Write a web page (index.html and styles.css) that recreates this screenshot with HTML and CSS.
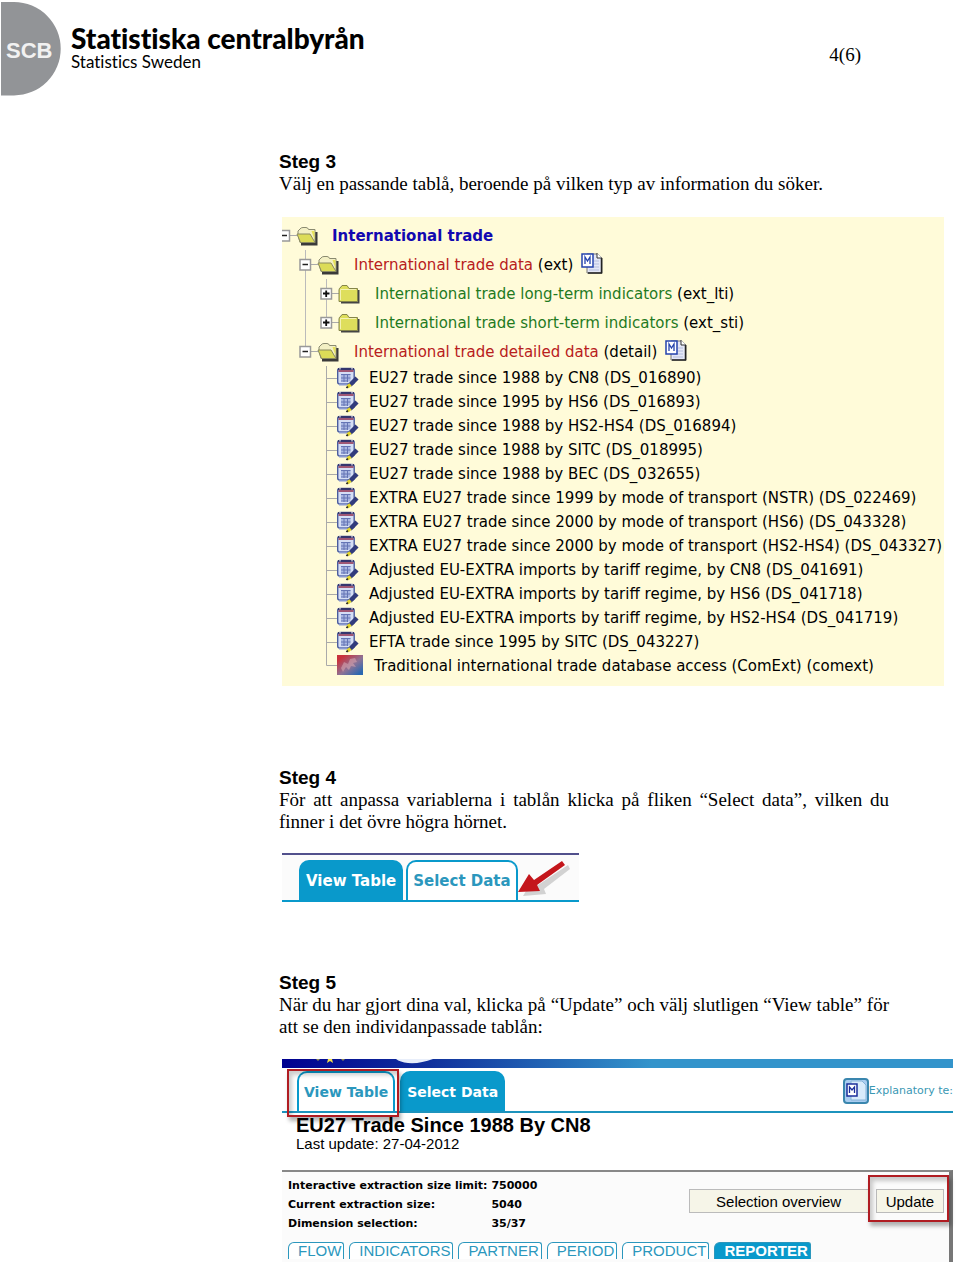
FILE: index.html
```html
<!DOCTYPE html>
<html lang="sv">
<head>
    <meta charset="UTF-8">
    <meta name="viewport" content="width=device-width, initial-scale=1.0">
    <title>Statistiska centralbyrån</title>
    <link rel="stylesheet" href="styles.css">
</head>
<body>
    <!-- Shared icons -->
    <svg class="sprite" aria-hidden="true">
        <symbol id="folder-open" viewBox="0 0 22 20">
            <path d="M5 18H20V6" fill="none" stroke="#3a3a3a" stroke-width="3"/>
            <path d="M2 9V5Q3 4 4 3Q5 1.500 7 1.500H10Q12 1.500 12.500 3.500H19V16.500H4Z" fill="#f3f0c4" stroke="#8a8a70"/>
            <path d="M1 8H14L19 16.500H4.500Z" fill="#dcdc58" stroke="#8a8a60"/>
            <path d="M15.500 5H18.500V13.500Z" fill="#e6e25a"/>
        </symbol>
        <symbol id="folder" viewBox="0 0 22 20">
            <path d="M3 18.500H20.500V6" fill="none" stroke="#444" stroke-width="2"/>
            <path d="M1 6Q1 4 3 3L4 1.500H9L11 4.500H19.500V17.500H1Z" fill="#dede5c" stroke="#85854a"/>
            <path d="M2.500 16V5.500H18" fill="none" stroke="#f4f2b4"/>
        </symbol>
        <symbol id="node-open" viewBox="0 0 40 30">
            <path d="M12 14.500H19" stroke="#aaa"/>
            <rect x="1" y="9.500" width="10.500" height="10.500" fill="#fff" stroke="#999" stroke-width="1.500"/>
            <path d="M3.500 14.500H9" stroke="#222" stroke-width="1.500"/>
            <use href="#folder-open" x="18" y="5" width="22" height="20"/>
        </symbol>
        <symbol id="node-closed" viewBox="0 0 40 30">
            <path d="M12 14.500H19" stroke="#aaa"/>
            <rect x="1" y="9.500" width="10.500" height="10.500" fill="#fff" stroke="#999" stroke-width="1.500"/>
            <path d="M3 14.500H9.500M6.200 11.500V18" stroke="#111" stroke-width="1.800"/>
            <use href="#folder" x="18" y="5" width="22" height="20"/>
        </symbol>
        <symbol id="dataset" viewBox="0 0 33 24">
            <path d="M0.500 0V24M0 12.500H11" stroke="#aaa"/>
            <rect x="11.700" y="2.500" width="16.500" height="15.500" rx="2" fill="#d5def5" stroke="#4a5c9e" stroke-width="1.400"/>
            <path d="M12 3H28" stroke="#34366e" stroke-width="2"/>
            <path d="M12.500 5H27.500" stroke="#8d2a48" stroke-width="1.500"/>
            <path d="M14 1.500V3.500M26 1.500V3.500" stroke="#fff"/>
            <rect x="15" y="8" width="9.500" height="7.500" fill="#a9b7e2"/>
            <path d="M15 8.500H24.500M15 12H24.500M15 15H22" stroke="#6475b5"/>
            <path d="M18 8V16M21.500 8V16" stroke="#6475b5"/>
            <path d="M13 18.500H21" stroke="#8a9ad0" stroke-width="2"/>
            <path d="M31 12L24 19" stroke="#313b7c" stroke-width="4.500"/>
            <path d="M24.500 18.500L21.500 21" stroke="#e3d72c" stroke-width="3.500"/>
            <path d="M21.800 20.500L20.500 22" stroke="#222" stroke-width="1.800"/>
        </symbol>
        <symbol id="metadata" viewBox="0 0 22 22">
            <path d="M6 2H17L21 6V21H6Z" fill="#e4e7f6" stroke="#777"/>
            <path d="M7 21H20.500V6" fill="none" stroke="#222" stroke-width="1.500"/>
            <path d="M16 1V6H21" fill="#fff" stroke="#333"/>
            <path d="M13 9H18M13 12H18M8 15H18M8 18H18" stroke="#b4bddd"/>
            <rect x="1" y="2" width="11" height="13" fill="#fff" stroke="#2443ad" stroke-width="1.500"/>
            <path d="M4 12V5L6.500 9L9 5V12" fill="none" stroke="#2443ad" stroke-width="1.300"/>
        </symbol>
    </svg>

    <header class="page-header">
        <svg class="logo" viewBox="0 0 61 96" role="img" aria-label="SCB">
            <path d="M1 2H14A46.700 46.700 0 0 1 14 95.400H1Z" fill="#929497"/>
            <text x="6" y="58" class="logo-letters">SCB</text>
        </svg>
        <div class="brand">
            <div class="brand-name">Statistiska centralbyrån</div>
            <div class="brand-sub">Statistics Sweden</div>
        </div>
        <div class="page-number">4(6)</div>
    </header>

    <main>
        <section class="step">
            <h2>Steg 3</h2>
            <p>Välj en passande tablå, beroende på vilken typ av information du söker.</p>

            <div class="tree">
                <div class="row root">
                    <svg class="node-root" viewBox="4 0 36 30"><use href="#node-open" width="40" height="30"/></svg>
                    <a href="#">International trade</a>
                </div>
                <ul class="level-1">
                    <li>
                        <div class="row theme">
                            <svg class="node" viewBox="0 0 40 30"><path d="M6.500 0V30" stroke="#bbb"/><use href="#node-open" width="40" height="30"/></svg>
                            <span><a href="#">International trade data</a> (ext)</span>
                            <svg class="meta"><use href="#metadata"/></svg>
                        </div>
                        <ul class="level-2">
                            <li class="row group">
                                <svg class="node" viewBox="0 0 40 30"><path d="M6.500 0V30" stroke="#bbb"/><use href="#node-closed" width="40" height="30"/></svg>
                                <span><a href="#">International trade long-term indicators</a> (ext_lti)</span>
                            </li>
                            <li class="row group">
                                <svg class="node" viewBox="0 0 40 30"><path d="M6.500 0V15" stroke="#bbb"/><use href="#node-closed" width="40" height="30"/></svg>
                                <span><a href="#">International trade short-term indicators</a> (ext_sti)</span>
                            </li>
                        </ul>
                    </li>
                    <li>
                        <div class="row theme">
                            <svg class="node" viewBox="0 0 40 30"><path d="M6.500 0V15" stroke="#bbb"/><use href="#node-open" width="40" height="30"/></svg>
                            <span><a href="#">International trade detailed data</a> (detail)</span>
                            <svg class="meta"><use href="#metadata"/></svg>
                        </div>
                        <ul class="datasets">
                            <li><svg><use href="#dataset"/></svg><a href="#">EU27 trade since 1988 by CN8 (DS_016890)</a></li>
                            <li><svg><use href="#dataset"/></svg><a href="#">EU27 trade since 1995 by HS6 (DS_016893)</a></li>
                            <li><svg><use href="#dataset"/></svg><a href="#">EU27 trade since 1988 by HS2-HS4 (DS_016894)</a></li>
                            <li><svg><use href="#dataset"/></svg><a href="#">EU27 trade since 1988 by SITC (DS_018995)</a></li>
                            <li><svg><use href="#dataset"/></svg><a href="#">EU27 trade since 1988 by BEC (DS_032655)</a></li>
                            <li><svg><use href="#dataset"/></svg><a href="#">EXTRA EU27 trade since 1999 by mode of transport (NSTR) (DS_022469)</a></li>
                            <li><svg><use href="#dataset"/></svg><a href="#">EXTRA EU27 trade since 2000 by mode of transport (HS6) (DS_043328)</a></li>
                            <li><svg><use href="#dataset"/></svg><a href="#">EXTRA EU27 trade since 2000 by mode of transport (HS2-HS4) (DS_043327)</a></li>
                            <li><svg><use href="#dataset"/></svg><a href="#">Adjusted EU-EXTRA imports by tariff regime, by CN8 (DS_041691)</a></li>
                            <li><svg><use href="#dataset"/></svg><a href="#">Adjusted EU-EXTRA imports by tariff regime, by HS6 (DS_041718)</a></li>
                            <li><svg><use href="#dataset"/></svg><a href="#">Adjusted EU-EXTRA imports by tariff regime, by HS2-HS4 (DS_041719)</a></li>
                            <li><svg><use href="#dataset"/></svg><a href="#">EFTA trade since 1995 by SITC (DS_043227)</a></li>
                            <li>
                                <svg class="comext" viewBox="0 0 38 24">
                                    <defs>
                                        <linearGradient id="comext-bg" x1="0" y1="0" x2="1" y2="1">
                                            <stop offset="0.150" stop-color="#c8323c"/>
                                            <stop offset="0.550" stop-color="#8d7396"/>
                                            <stop offset="0.900" stop-color="#2a68b0"/>
                                        </linearGradient>
                                    </defs>
                                    <path d="M0.500 0V11.500H11" fill="none" stroke="#aaa"/>
                                    <rect x="11" y="1" width="26" height="20" fill="url(#comext-bg)"/>
                                    <path d="M15 14L18 8L22 10L24 5L29 4L31 8L27 9L30 13L25 12L23 16L20 13L17 18Z" fill="#d3a5b0" opacity="0.600"/>
                                </svg>
                                <a href="#">Traditional international trade database access (ComExt) (comext)</a>
                            </li>
                        </ul>
                    </li>
                </ul>
            </div>
        </section>

        <section class="step step-4">
            <h2>Steg 4</h2>
            <p>För att anpassa variablerna i tablån klicka på fliken “Select data”, vilken du finner i det övre högra hörnet.</p>

            <div class="tabs-figure">
                <nav class="tabs">
                    <a href="#" class="tab filled">View Table</a>
                    <a href="#" class="tab outlined">Select Data</a>
                </nav>
                <svg class="arrow" viewBox="0 0 60 46">
                    <path d="M6 36L15 21L21 25L51 5L53 9L27 29L29 34Z" fill="#888" opacity="0.350"/>
                    <path d="M1 32L12 14L17 20L45 1L48 5L20 25L23 31Z" fill="#c4161c"/>
                </svg>
            </div>
        </section>

        <section class="step step-5">
            <h2>Steg 5</h2>
            <p>När du har gjort dina val, klicka på “Update” och välj slutligen “View table” för att se den individanpassade tablån:</p>

            <div class="extraction">
                <svg class="banner" viewBox="0 0 671 9" preserveAspectRatio="none">
                    <defs>
                        <linearGradient id="banner-bg">
                            <stop offset="0" stop-color="#000090"/>
                            <stop offset="0.220" stop-color="#10309c"/>
                            <stop offset="0.550" stop-color="#3394cb"/>
                        </linearGradient>
                    </defs>
                    <rect width="671" height="9" fill="url(#banner-bg)"/>
                    <path d="M46 0H50L51 4L48 2L45 4Z" fill="#f5df4c"/>
                    <path d="M34 0H38L36 2ZM59 0H63L61 2Z" fill="#8f8a5a"/>
                    <path d="M114 0H151Q138 5 126 4Q118 3 114 0Z" fill="#e8eefa"/>
                </svg>
                <div class="tab-bar">
                    <nav class="tabs">
                        <a href="#" class="tab outlined marked">View Table</a>
                        <a href="#" class="tab filled">Select Data</a>
                    </nav>
                    <a href="#" class="explanatory">
                        <svg viewBox="0 0 26 26">
                            <rect x="1" y="1" width="24" height="24" rx="3" fill="#a9cdf0" stroke="#3a86ae" stroke-width="2"/>
                            <path d="M8 3H19L23 7V22H8Z" fill="#d8ebfb" stroke="#86b4d8"/>
                            <rect x="4" y="6" width="10" height="12" fill="#fff" stroke="#1b2f9c" stroke-width="1.500"/>
                            <path d="M6.500 15V9L9 12L11.500 9V15" fill="none" stroke="#1b2f9c" stroke-width="1.300"/>
                        </svg>
                        <span>Explanatory te:</span>
                    </a>
                </div>
                <h3>EU27 Trade Since 1988 By CN8</h3>
                <div class="updated">Last update: 27-04-2012</div>

                <div class="panel">
                    <div class="panel-top">
                        <table>
                            <tr><th scope="row">Interactive extraction size limit:</th><td>750000</td></tr>
                            <tr><th scope="row">Current extraction size:</th><td>5040</td></tr>
                            <tr><th scope="row">Dimension selection:</th><td>35/37</td></tr>
                        </table>
                        <div class="actions">
                            <button type="button" class="overview">Selection overview</button>
                            <span class="marked"><button type="button">Update</button></span>
                        </div>
                    </div>
                    <nav class="dimensions">
                        <a href="#">FLOW</a>
                        <a href="#">INDICATORS</a>
                        <a href="#">PARTNER</a>
                        <a href="#">PERIOD</a>
                        <a href="#">PRODUCT</a>
                        <a href="#" class="active">REPORTER</a>
                    </nav>
                </div>
            </div>
        </section>
    </main>
</body>
</html>
```
FILE: styles.css
```css
* {
    box-sizing: border-box;
}
body {
    margin: 0;
    background-color: #fff;
    color: #000;
    font-family: "Liberation Serif", "Times New Roman", serif;
    font-size: 19px;
    line-height: 22px;
}
a {
    color: inherit;
    text-decoration: none;
}
ul {
    list-style: none;
    margin: 0;
    padding: 0;
}
svg {
    flex: none;
}
.sprite {
    display: none;
}

/* Header */
.page-header {
    display: flex;
    align-items: flex-start;
    padding-right: 99px;
}
.logo {
    width: 61px;
    height: 96px;
}
.logo-letters {
    font-family: "Liberation Sans", Arial, sans-serif;
    font-size: 22px;
    font-weight: bold;
    fill: #f1f1f1;
}
.brand {
    flex: 1;
    padding: 24px 0 0 10px;
    font-family: Lato, sans-serif;
    font-variant-ligatures: none;
}
.brand-name {
    font-size: 28px;
    font-weight: 900;
    line-height: 29px;
}
.brand-sub {
    font-size: 17px;
    line-height: 18px;
}
.page-number {
    padding-top: 44px;
}

/* Steps */
main {
    padding: 55px 7px 0 279px;
}
h2 {
    margin: 0;
    font-family: "Liberation Sans", Arial, sans-serif;
    font-size: 19px;
    line-height: 22px;
}
p {
    max-width: 610px;
    margin: 0;
    text-align: justify;
}
.step-4 {
    padding-top: 81px;
}
.step-5 {
    padding-top: 70px;
}

/* Navigation tree */
.tree {
    max-width: 662px;
    margin: 22px 0 0 3px;
    padding: 4px 0 8px;
    background-color: #fffbd9;
    font-family: "DejaVu Sans", Verdana, sans-serif;
    font-size: 15px;
    white-space: nowrap;
}
.row {
    display: flex;
    align-items: center;
    height: 29px;
}
.node {
    width: 40px;
    height: 30px;
    margin-right: 15px;
}
.node-root {
    width: 36px;
    height: 30px;
    margin-right: 14px;
}
.meta {
    width: 22px;
    height: 22px;
    margin: 0 0 4px 8px;
}
.root {
    color: #1208b0;
    font-weight: bold;
}
.theme a {
    color: #b8201c;
}
.group a {
    color: #1f7a1f;
}
.level-1 .theme {
    padding-left: 17px;
}
.level-2 {
    margin-left: 23px;
    padding-left: 14px;
    border-left: 1px solid #bbb;
}
.datasets {
    margin-left: 44px;
}
.datasets li {
    display: flex;
    align-items: center;
    height: 24px;
}
.datasets svg {
    width: 33px;
    height: 24px;
    margin-right: 10px;
}
.datasets .comext {
    width: 38px;
}

/* Tabs */
.tabs {
    display: flex;
    align-items: flex-end;
    gap: 3px;
    font-family: "DejaVu Sans", Verdana, sans-serif;
    font-size: 15px;
    font-weight: bold;
}
.tab {
    padding: 8px 5px;
    border: 2px solid #0999cb;
    border-bottom: 0;
    border-radius: 10px 10px 0 0;
}
.filled {
    background-color: #0999cb;
    color: #fff;
}
.outlined {
    background-color: #fff;
    color: #2b97bd;
}
.tabs-figure {
    position: relative;
    max-width: 297px;
    margin: 20px 0 0 3px;
    padding: 5px 0 0 17px;
    border-top: 2px solid #51508c;
    border-bottom: 2px solid #0999cb;
    background-color: #fbfbfb;
}
.arrow {
    position: absolute;
    top: 5px;
    right: 2px;
    width: 60px;
    height: 46px;
}

/* Extraction page */
.extraction {
    margin: 21px 0 0 3px;
    font-family: "Liberation Sans", Arial, sans-serif;
}
.banner {
    display: block;
    width: 100%;
    height: 9px;
}
.tab-bar {
    display: flex;
    justify-content: space-between;
    align-items: center;
    padding: 3px 0 0 15px;
    border-bottom: 2px solid #1c93bd;
}
.tab-bar .tabs {
    gap: 5px;
    font-size: 14px;
}
.marked {
    position: relative;
}
.marked::after {
    content: "";
    position: absolute;
    inset: -4px -6px -6px -12px;
    border: 2px solid #b01c22;
    box-shadow: 2px 4px 4px rgba(0, 0, 0, 0.3), inset 3px 4px 4px rgba(0, 0, 0, 0.2);
    pointer-events: none;
}
.explanatory {
    display: flex;
    align-items: center;
    color: #3a98b4;
    font-family: "DejaVu Sans", Verdana, sans-serif;
    font-size: 11px;
}
.explanatory svg {
    width: 26px;
    height: 26px;
}
h3 {
    margin: 2px 0 0 14px;
    font-size: 20px;
    line-height: 20px;
}
.updated {
    margin-left: 14px;
    font-size: 15px;
    line-height: 18px;
}
.panel {
    margin-top: 17px;
    border-top: 2px solid #888;
    border-right: 4px solid #777;
    background-color: #fbfbfb;
}
.panel-top {
    display: flex;
    justify-content: space-between;
    padding: 4px 5px 9px 4px;
}
table {
    border-spacing: 0;
    font-family: "DejaVu Sans", Verdana, sans-serif;
    font-size: 11px;
    font-weight: bold;
    line-height: 17px;
}
th, td {
    padding: 1px 2px;
    text-align: left;
}
.actions {
    display: flex;
    align-items: flex-start;
    gap: 7px;
    padding-top: 13px;
}
button {
    display: block;
    height: 24px;
    padding: 0 9px;
    border: 1px solid #bbb;
    background-color: #f6f5e8;
    color: #000;
    font-family: inherit;
    font-size: 15px;
}
.overview {
    width: 180px;
}
.actions .marked::after {
    inset: -14px -5px -9px -8px;
}
.dimensions {
    display: flex;
    gap: 5px;
    padding: 0 0 3px 6px;
    font-size: 15px;
    line-height: 16px;
}
.dimensions a {
    padding: 0 2px 0 9px;
    border: 1px solid #2b97bd;
    border-bottom: 0;
    border-radius: 6px 3px 0 0;
    background-color: #fff;
    color: #2b97bd;
}
.dimensions .active {
    background-color: #0999cb;
    color: #fff;
    font-weight: bold;
}
```
